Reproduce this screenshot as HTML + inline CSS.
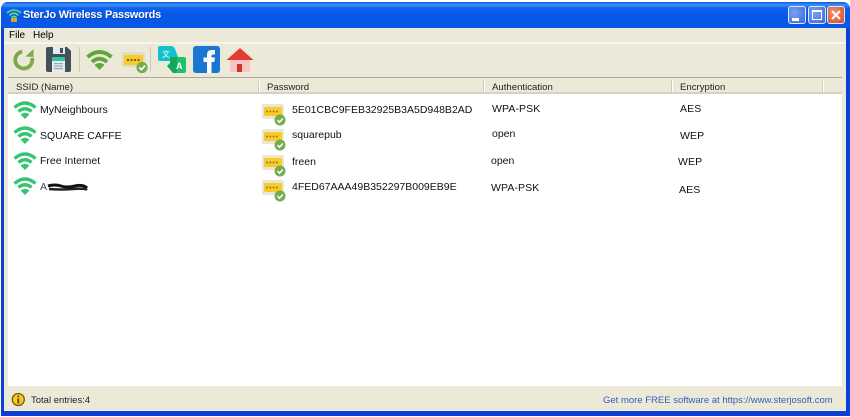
<!DOCTYPE html>
<html><head><meta charset="utf-8">
<style>
html,body{margin:0;padding:0;width:850px;height:417px;overflow:hidden;background:#fff}
*{box-sizing:border-box}
#win{position:absolute;left:1px;top:2px;width:849px;height:414px;border-radius:7px 7px 0 0;background:#0a3fd8;overflow:hidden}
#tb{position:absolute;left:0;top:0;width:849px;height:28px;background:linear-gradient(180deg,#0a5ce0 0,#3e92f8 3px,#0f60ea 6px,#0758e6 14px,#0659e8 22px,#0a58e0 26px,#0a40c8 28px)}
#client{position:absolute;left:3px;top:26px;width:842px;height:383px;background:#ece9d8}
.t{position:absolute;font-family:"Liberation Sans",sans-serif;font-size:10.5px;line-height:13px;color:#000;white-space:pre}
.h{color:#222;font-size:9.6px;top:81px}
.r{font-size:10.5px;color:#111}
svg{position:absolute;overflow:visible}
.abs{position:absolute}
.btn{position:absolute;top:6px;width:18px;height:18px;border:1px solid #dfe8fb;border-radius:3px}
</style></head>
<body>
<div id="win"><div id="tb"></div><div id="client"></div></div>

<div class="abs" style="left:4px;top:42px;width:842px;height:2px;background:#f7f5ec"></div>
<div class="abs" style="left:8px;top:77px;width:834px;height:1px;background:#aca899"></div>
<div class="abs" style="left:8px;top:78px;width:834px;height:16px;background:#ece9d8;border-bottom:2px solid #d6d2c2"></div>
<div class="abs" style="left:8px;top:94px;width:834px;height:292px;background:#fff"></div>
<div class="abs" style="left:4px;top:410px;width:842px;height:1px;background:#f5f3e8"></div>
<div class="abs" style="left:258px;top:80px;width:2px;height:12px;background:#fff;border-left:1px solid #cfcbb9"></div>
<div class="abs" style="left:483px;top:80px;width:2px;height:12px;background:#fff;border-left:1px solid #cfcbb9"></div>
<div class="abs" style="left:671px;top:80px;width:2px;height:12px;background:#fff;border-left:1px solid #cfcbb9"></div>
<div class="abs" style="left:822px;top:80px;width:2px;height:12px;background:#fff;border-left:1px solid #cfcbb9"></div>
<div class="abs" style="left:79px;top:47px;width:1px;height:25px;background:#cfcbb9"></div>
<div class="abs" style="left:150px;top:47px;width:1px;height:25px;background:#cfcbb9"></div>

<!-- title icon -->
<svg style="left:6px;top:8px" width="16" height="15" viewBox="0 0 16 15">
<path d="M1 5Q8 -1 15 5M3.500 7.500Q8 3 12.500 7.500M5.500 9.500Q8 7.500 10.500 9.500" fill="none" stroke="#5ed08a" stroke-width="1.800"/>
<rect x="5" y="10" width="6" height="4" fill="#d9a520"/>
</svg>
<div class="t" style="left:23px;top:8px;font-size:11px;line-height:15px;font-weight:bold;color:#fff;letter-spacing:-.22px;text-shadow:1px 1px 0 rgba(10,58,156,.7)">SterJo Wireless Passwords</div>

<!-- window buttons -->
<div class="btn" style="left:788px;background:radial-gradient(circle at 35% 35%,#7ba2f2,#3a66dc)"><div class="abs" style="left:3px;top:11px;width:7px;height:3px;background:#fff"></div></div>
<div class="btn" style="left:808px;background:radial-gradient(circle at 35% 35%,#7ba2f2,#3a66dc)"><div class="abs" style="left:3px;top:3px;width:10px;height:10px;border:1px solid #fff;border-top-width:2px"></div></div>
<div class="btn" style="left:827px;background:radial-gradient(circle at 35% 35%,#f09070,#d8481f)">
<svg style="left:3px;top:3px" width="10" height="10"><path d="M1 1L9 9M9 1L1 9" stroke="#fff" stroke-width="2"/></svg></div>

<div class="t" style="left:9px;top:29px;font-size:10px">File</div>
<div class="t" style="left:33px;top:29px;font-size:10px">Help</div>

<!-- toolbar icons -->
<svg style="left:13px;top:47px" width="24" height="26" viewBox="0 0 24 26">
<path d="M9.200 4.600A8.500 8.500 0 1 0 19 11" fill="none" stroke="#7aab48" stroke-width="3.800"/>
<path d="M20.500 2V10L12.500 9.500Z" fill="#7aab48"/>
</svg>
<svg style="left:46px;top:47px" width="25" height="25" viewBox="0 0 25 25">
<path d="M2 0H21L25 4V23Q25 25 23 25H2Q0 25 0 23V2Q0 0 2 0Z" fill="#434f5b"/>
<rect x="7" y="0" width="12" height="7" fill="#e6ecee"/><rect x="14" y="1" width="3" height="5" fill="#434f5b"/>
<rect x="6" y="10" width="13" height="15" fill="#e6ebee"/>
<rect x="6" y="10" width="13" height="4" fill="#2ec4a6"/>
<rect x="8" y="16" width="9" height="1.200" fill="#9aa6ae"/><rect x="8" y="18.500" width="9" height="1.200" fill="#9aa6ae"/><rect x="8" y="21" width="9" height="1.200" fill="#9aa6ae"/>
</svg>
<svg style="left:86px;top:50px" width="27" height="20" viewBox="0 0 27 20">
<path d="M1.500 7Q13.500 -3 25.500 7M6 12Q13.500 5.500 21 12" fill="none" stroke="#5fa63c" stroke-width="3.800"/>
<path d="M8.500 15Q13.500 11 18.500 15L13.500 20Z" fill="#5fa63c"/>
</svg>
<svg style="left:122px;top:52px" width="26" height="21" viewBox="0 0 26 21">
<rect x="0" y="0" width="23" height="15" rx="2" fill="#dedccb"/>
<rect x="2" y="3" width="19" height="10" rx="1" fill="#fbcb1f"/>
<circle cx="6" cy="8" r="1.100" fill="#555"/><circle cx="9.500" cy="8" r="1.100" fill="#555"/><circle cx="13" cy="8" r="1.100" fill="#555"/><circle cx="16.500" cy="8" r="1.100" fill="#555"/>
<circle cx="20" cy="15.500" r="5.600" fill="#76ab4e"/>
<path d="M17.300 15.500L19.400 17.700L23 13.700" fill="none" stroke="#fff" stroke-width="1.600"/>
</svg>
<svg style="left:157px;top:46px" width="30" height="28" viewBox="0 0 30 28">
<path d="M3 0H14Q17 0 18 3L21 11H13V15H3Q1 15 1 13V2Q1 0 3 0Z" fill="#12c0ce"/>
<text x="5" y="11" font-family="Liberation Sans,Noto Sans CJK SC,sans-serif" font-size="8" fill="#fff">文</text>
<path d="M17 11H27Q29 11 29 13V25Q29 27 27 27H16L13 22L17 22Z" fill="#1fc26a"/>
<path d="M13 11H20V27H16L10 20L13 17Z" fill="#10a85a"/>
<text x="19" y="23" font-family="Liberation Sans,sans-serif" font-size="9" font-weight="bold" fill="#fff">A</text>
</svg>
<svg style="left:193px;top:46px" width="28" height="28" viewBox="0 0 28 28">
<rect width="27" height="27" rx="3" fill="#1976d2"/>
<path d="M14 27V16H10.500V11.500H14V8.500Q14 4 19 4H22V8.500H20Q18.500 8.500 18.500 10V11.500H22L21.300 16H18.500V27Z" fill="#fff"/>
</svg>
<svg style="left:226px;top:47px" width="28" height="26" viewBox="0 0 28 26">
<rect x="4" y="12" width="20" height="13" fill="#f8c4c4"/>
<path d="M14 1L27.500 13H0.500Z" fill="#e53935"/>
<rect x="11" y="17" width="5" height="8" fill="#d92d2d"/>
</svg>

<!-- header -->
<div class="t h" style="left:16px">SSID (Name)</div>
<div class="t h" style="left:267px">Password</div>
<div class="t h" style="left:492px">Authentication</div>
<div class="t h" style="left:680px">Encryption</div>

<!-- icons -->
<svg width="0" height="0" style="position:absolute"><defs>
<g id="w"><path d="M1.500 6.500Q12 -2.500 22.500 6.500M5.500 10.500Q12 5 18.500 10.500" fill="none" stroke="#35c46f" stroke-width="3.400"/><path d="M7.500 13.500Q12 10 16.500 13.500L12 18Z" fill="#35c46f"/></g>
<g id="k"><rect x="0" y="0" width="22" height="15" rx="2" fill="#e8e6d6"/><rect x="2" y="3" width="18" height="9" rx="1" fill="#fbcb1f"/><circle cx="5" cy="7.500" r="1" fill="#777"/><circle cx="8.300" cy="7.500" r="1" fill="#777"/><circle cx="11.600" cy="7.500" r="1" fill="#777"/><circle cx="14.900" cy="7.500" r="1" fill="#777"/><circle cx="18" cy="16" r="5.500" fill="#76ab4e"/><path d="M15.500 16L17.500 18.200L20.800 14.500" fill="none" stroke="#fff" stroke-width="1.500"/></g>
</defs></svg>
<svg style="left:13px;top:101px" width="24" height="18"><use href="#w"/></svg>
<svg style="left:13px;top:126px" width="24" height="18"><use href="#w"/></svg>
<svg style="left:13px;top:152px" width="24" height="18"><use href="#w"/></svg>
<svg style="left:13px;top:177px" width="24" height="18"><use href="#w"/></svg>

<svg style="left:262px;top:104px" width="24" height="22"><use href="#k"/></svg>
<svg style="left:262px;top:129px" width="24" height="22"><use href="#k"/></svg>
<svg style="left:262px;top:155px" width="24" height="22"><use href="#k"/></svg>
<svg style="left:262px;top:180px" width="24" height="22"><use href="#k"/></svg>

<!-- rows -->
<div class="t r" style="left:40px;top:104px">MyNeighbours</div>
<div class="t r" style="left:40px;top:130px">SQUARE CAFFE</div>
<div class="t r" style="left:40px;top:155px">Free Internet</div>
<div class="t r" style="left:40px;top:181px;color:#445">A</div>
<svg style="left:47px;top:182px" width="42" height="11" viewBox="0 0 42 11"><path d="M1 4Q8 2 14 4T28 4T40 6" fill="none" stroke="#111" stroke-width="3"/><path d="M2 7Q14 8 26 7T40 8" fill="none" stroke="#222" stroke-width="2.500"/></svg>

<div class="t r" style="left:292px;top:104px">5E01CBC9FEB32925B3A5D948B2AD</div>
<div class="t r" style="left:292px;top:129px">squarepub</div>
<div class="t r" style="left:292px;top:156px">freen</div>
<div class="t r" style="left:292px;top:181px">4FED67AAA49B352297B009EB9E</div>

<div class="t r" style="left:492px;top:103px;letter-spacing:.1px">WPA-PSK</div>
<div class="t r" style="left:492px;top:128px">open</div>
<div class="t r" style="left:491px;top:155px">open</div>
<div class="t r" style="left:491px;top:182px;letter-spacing:.1px">WPA-PSK</div>

<div class="t r" style="left:680px;top:103px;letter-spacing:.1px">AES</div>
<div class="t r" style="left:680px;top:130px;letter-spacing:.1px">WEP</div>
<div class="t r" style="left:678px;top:156px;letter-spacing:.1px">WEP</div>
<div class="t r" style="left:679px;top:184px;letter-spacing:.1px">AES</div>

<!-- status -->
<svg style="left:11px;top:392px" width="15" height="15" viewBox="0 0 15 15">
<circle cx="7.300" cy="7.500" r="6" fill="#f9c91e" stroke="#6d5a1c" stroke-width="1.300"/>
<rect x="6.400" y="3.500" width="1.800" height="1.800" fill="#5b4a14"/><rect x="6.400" y="6.500" width="1.800" height="5" fill="#5b4a14"/>
</svg>
<div class="t" style="left:31px;top:394px;font-size:9.5px;color:#222">Total entries:4</div>
<div class="t" style="left:603px;top:394px;font-size:9.5px;color:#2f5fb8">Get more FREE software at https://www.sterjosoft.com</div>
</body></html>
